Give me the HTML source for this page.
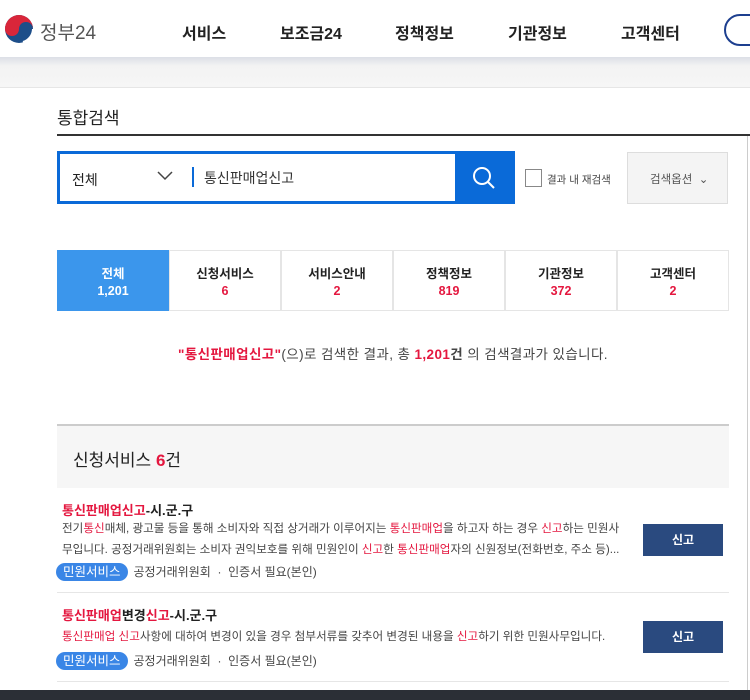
<!DOCTYPE html><html><head><meta charset="utf-8"><style>
*{margin:0;padding:0;box-sizing:border-box}
body{width:750px;height:700px;overflow:hidden;background:#fff;font-family:"Liberation Sans","Noto Sans CJK KR",sans-serif;color:#333;position:relative}
.a{position:absolute}
.r{color:#e4173f}
.nav span{position:absolute;top:20px;font-size:16px;font-weight:bold;color:#222}
.tab{position:absolute;top:250px;width:112px;height:61px;border:1px solid #e5e5e5;text-align:center;font-size:12.5px;font-weight:bold;padding-top:15px;line-height:17px;color:#222}
.tab b{display:block;color:#e4173f}
.desc{font-size:11.6px;color:#444;line-height:21px;white-space:nowrap}
.tag{display:inline-block;background:#3a86e6;color:#fff;border-radius:9px;padding:0 7px;font-size:12.5px;line-height:18px;margin-right:6px}
.meta{font-size:12px;color:#444}
.btn{position:absolute;left:643px;width:80px;height:32px;background:#2a4a7f;color:#fff;font-size:12px;font-weight:bold;text-align:center;line-height:32px}
</style></head><body>
<svg class="a" style="left:4px;top:14px" width="30" height="30" viewBox="0 0 30 30"><circle cx="15" cy="15" r="14" fill="#1d4e89"/><path d="M1 15a14 14 0 0 1 28 0c0-4-3-7-7-7s-7 3-7 7-3 7-7 7-7-3-7-7z" fill="#d9263a"/><path d="M29 15a14 14 0 0 1-10 13" stroke="#fff" stroke-width="2" fill="none"/></svg>
<div class="a" style="left:40px;top:18px;font-size:19px;color:#555">정부24</div>
<div class="nav"><span style="left:182px">서비스</span><span style="left:280px">보조금24</span><span style="left:395px">정책정보</span><span style="left:508px">기관정보</span><span style="left:621px">고객센터</span></div>
<div class="a" style="left:724px;top:14px;width:60px;height:32px;border:2px solid #1d3f8f;border-radius:16px"></div>
<div class="a" style="left:0;top:57px;width:750px;height:31px;background:linear-gradient(#dcdfe6,#f3f3f3 30%,#f6f6f6);border-bottom:1px solid #e6e6e6"></div>
<div class="a" style="left:57px;top:104px;font-size:17px;color:#222">통합검색</div>
<div class="a" style="left:57px;top:134px;width:693px;height:2px;background:#333"></div>
<div class="a" style="left:747px;top:136px;width:1px;height:560px;background:#ccc"></div>
<div class="a" style="left:57px;top:151px;width:458px;height:53px;border:3px solid #0a6ad8;background:#fff"></div>
<div class="a" style="left:72px;top:170px;font-size:14px;color:#222">전체</div>
<svg class="a" style="left:157px;top:171px" width="16" height="10"><path d="M1 1l7 7 7-7" stroke="#444" stroke-width="1.5" fill="none"/></svg>
<div class="a" style="left:192px;top:167px;width:2px;height:20px;background:#0a6ad8"></div>
<div class="a" style="left:204px;top:168px;font-size:14px;color:#333">통신판매업신고</div>
<div class="a" style="left:455px;top:151px;width:60px;height:53px;background:#0a6ad8"></div>
<svg class="a" style="left:472px;top:166px" width="24" height="24"><circle cx="10" cy="10" r="8" stroke="#fff" stroke-width="2" fill="none"/><path d="M16 16l6 6" stroke="#fff" stroke-width="2"/></svg>
<div class="a" style="left:525px;top:169px;width:17px;height:18px;border:1px solid #888;background:#fff"></div>
<div class="a" style="left:547px;top:172px;font-size:10.5px;color:#444">결과 내 재검색</div>
<div class="a" style="left:627px;top:152px;width:101px;height:52px;background:#f4f4f4;border:1px solid #ddd;font-size:11.5px;color:#555;padding:18px 0 0 22px">검색옵션 &nbsp;⌄</div>
<div class="tab" style="left:57px;background:#3b96ec;color:#fff;border-color:#3b96ec">전체<b style="color:#fff">1,201</b></div>
<div class="tab" style="left:169px">신청서비스<b>6</b></div>
<div class="tab" style="left:281px">서비스안내<b>2</b></div>
<div class="tab" style="left:393px">정책정보<b>819</b></div>
<div class="tab" style="left:505px">기관정보<b>372</b></div>
<div class="tab" style="left:617px">고객센터<b>2</b></div>
<div class="a" style="left:0;width:786px;top:343px;text-align:center;font-size:13.5px;color:#444;letter-spacing:0.4px"><b class="r">"통신판매업신고"</b>(으)로 검색한 결과, 총 <b class="r">1,201</b><b>건</b> 의 검색결과가 있습니다.</div>
<div class="a" style="left:57px;top:424px;width:672px;height:64px;background:#f6f6f6;border-top:2px solid #ccc"></div>
<div class="a" style="left:73px;top:446px;font-size:17px;color:#222">신청서비스 <b class="r">6</b>건</div>
<div class="a" style="left:62px;top:500px;font-size:13px;font-weight:bold;color:#222"><span class="r">통신판매업신고</span>-시.군.구</div>
<div class="a desc" style="left:62px;top:518px">전기<span class="r">통신</span>매체, 광고물 등을 통해 소비자와 직접 상거래가 이루어지는 <span class="r">통신판매업</span>을 하고자 하는 경우 <span class="r">신고</span>하는 민원사<br>무입니다. 공정거래위원회는 소비자 권익보호를 위해 민원인이 <span class="r">신고</span>한 <span class="r">통신판매업</span>자의 신원정보(전화번호, 주소 등)...</div>
<div class="a meta" style="left:56px;top:563px"><span class="tag">민원서비스</span>공정거래위원회 &nbsp;·&nbsp; 인증서 필요(본인)</div>
<div class="btn" style="top:524px">신고</div>
<div class="a" style="left:57px;top:592px;width:672px;height:1px;background:#e6e6e6"></div>
<div class="a" style="left:62px;top:605px;font-size:13px;font-weight:bold;color:#222"><span class="r">통신판매업</span>변경<span class="r">신고</span>-시.군.구</div>
<div class="a desc" style="left:62px;top:626px"><span class="r">통신판매업 신고</span>사항에 대하여 변경이 있을 경우 첨부서류를 갖추어 변경된 내용을 <span class="r">신고</span>하기 위한 민원사무입니다.</div>
<div class="a meta" style="left:56px;top:652px"><span class="tag">민원서비스</span>공정거래위원회 &nbsp;·&nbsp; 인증서 필요(본인)</div>
<div class="btn" style="top:621px">신고</div>
<div class="a" style="left:57px;top:681px;width:672px;height:1px;background:#e6e6e6"></div>
<div class="a" style="left:0;top:690px;width:750px;height:10px;background:#2b2f36"></div>
</body></html>
